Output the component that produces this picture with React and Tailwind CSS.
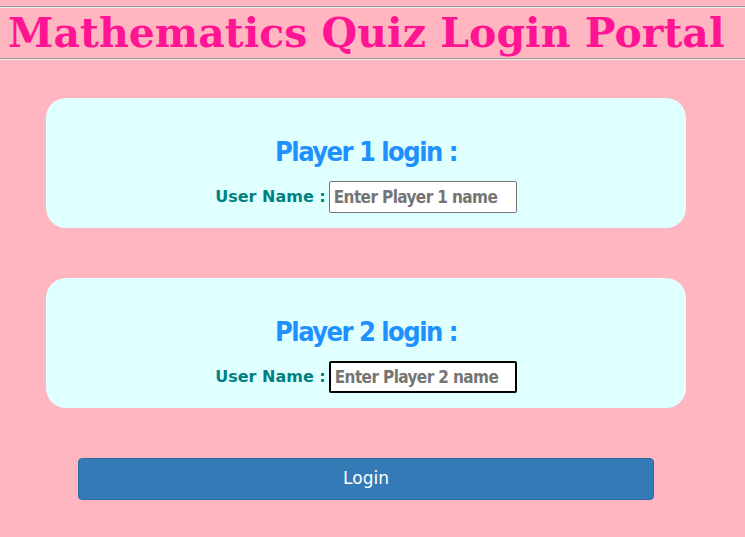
import React from 'react';

const PlayerCard = ({ num, focused }) => (
    <div className="ml-[46px] w-[640px] h-[130px] rounded-[20px] bg-[#e0ffff] flex flex-col items-center pt-[37px]">
        <h2 className="text-[27px] leading-[34px] font-bold text-[#1e90ff] tracking-[-1.5px] [font-stretch:condensed] [font-family:'DejaVu_Sans',sans-serif]">
            Player {num} login :
        </h2>
        <div className="flex items-center mt-[12px]">
            <span className="text-[16px] font-bold text-[#008080] mr-[3px] [font-family:'DejaVu_Sans',sans-serif]">
                User Name :
            </span>
            <input
                type="text"
                placeholder={`Enter Player ${num} name`}
                className={`w-[188px] h-[32px] px-[4px] bg-white rounded-[2px] text-[17px] font-bold tracking-[-0.6px] outline-none placeholder:text-[#757575] [font-stretch:condensed] [font-family:'DejaVu_Sans',sans-serif] ${focused ? 'border-2 border-black' : 'border border-[#767676]'}`}
            />
        </div>
    </div>
);

const App = () => {
    return (
        <div className="min-h-[537px] bg-[#ffb6c1] pt-[6px]">
            <hr className="h-[2px] border-0 border-t border-t-[#9a9a9a] border-b border-b-[#eeeeee]" />
            <h1 className="h-[50px] pl-[8px] text-[41px] leading-[50px] font-bold text-[#ff1493] [font-family:'DejaVu_Serif',serif] whitespace-nowrap">
                Mathematics Quiz Login Portal
            </h1>
            <hr className="h-[2px] border-0 border-t border-t-[#9a9a9a] border-b border-b-[#eeeeee]" />
            <div className="mt-[38px]">
                <PlayerCard num={1} />
            </div>
            <div className="mt-[50px]">
                <PlayerCard num={2} focused />
            </div>
            <div className="mt-[50px] pl-[78px] w-[654px] pb-[37px]">
                <button className="w-full h-[42px] rounded-[4px] bg-[#337ab7] border border-[#2e6da4] text-white text-[17px] [font-family:'DejaVu_Sans',sans-serif]">
                    Login
                </button>
            </div>
        </div>
    );
};

export default App;
